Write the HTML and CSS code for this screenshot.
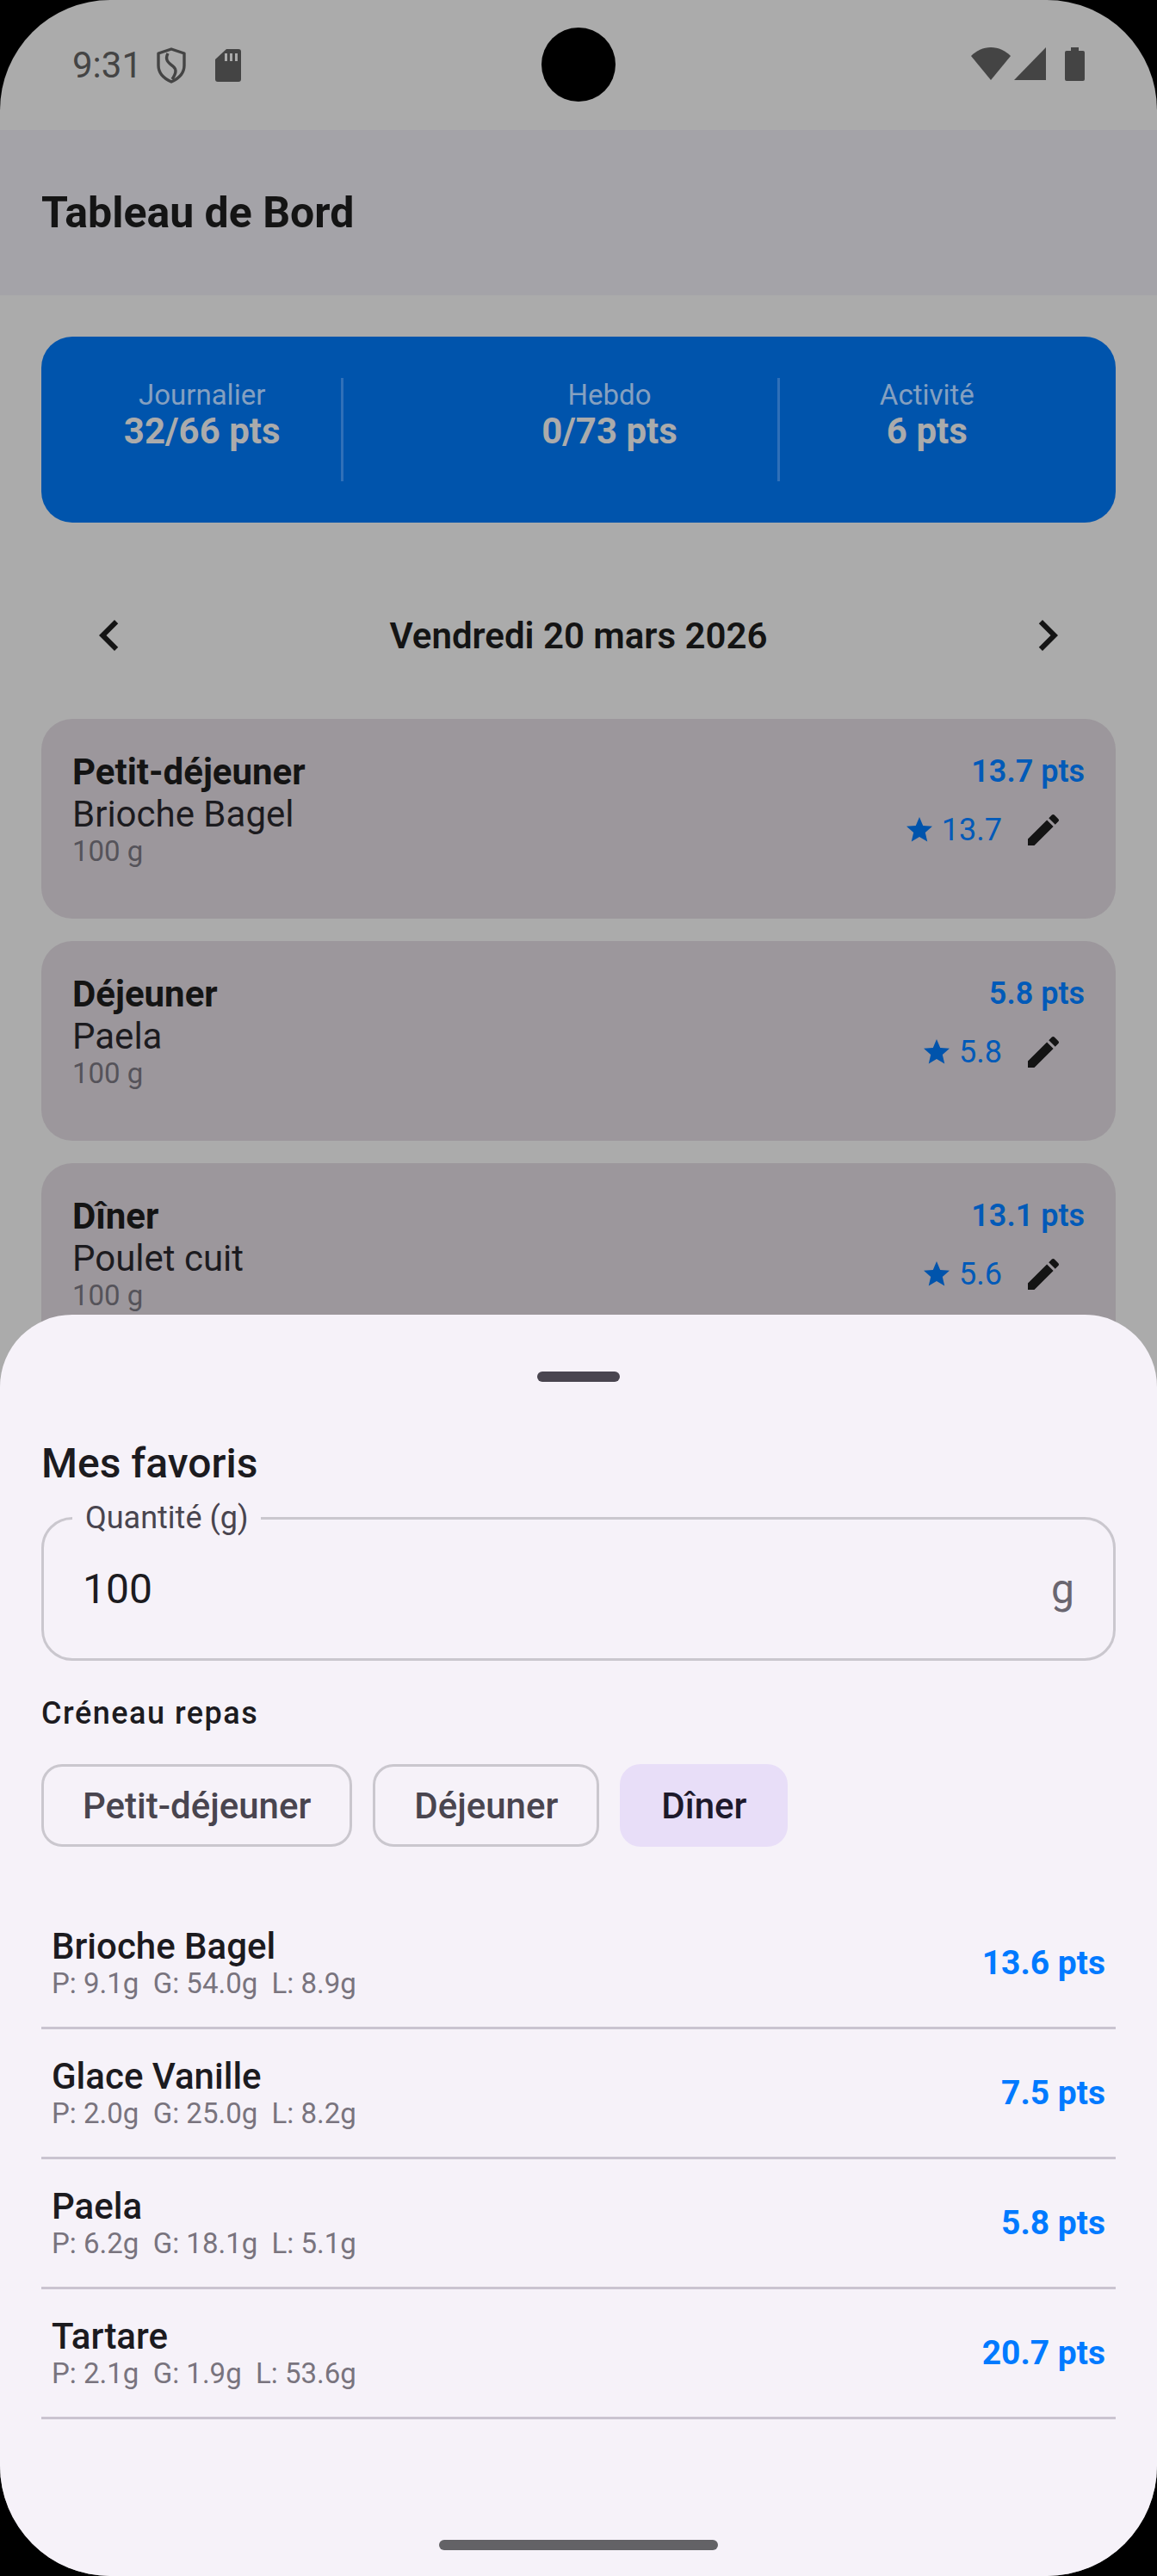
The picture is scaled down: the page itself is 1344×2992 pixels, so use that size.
FILE: index.html
```html
<!DOCTYPE html>
<html lang="fr">
<head>
<meta charset="utf-8">
<title>Tableau de Bord</title>
<link rel="stylesheet" href="styles.css">
</head>
<body>
<div class="device">
  <div class="screen">
    <div class="statusbar">
      <div class="status-left">
        <span class="time">9:31</span>
        <svg class="ic-shield" viewBox="0 0 34 42"><path d="M17 2 L32 7 V21 C32 30 26 36 17 40 C8 36 2 30 2 21 V7 Z" fill="none" stroke="#444" stroke-width="3.4" stroke-linejoin="round"/><path d="M13 7 C9 15 14 18 19 22 C24 26 22 31 18 37" fill="none" stroke="#444" stroke-width="3.4"/></svg>
        <svg class="ic-sd" viewBox="0 0 30 38"><path fill="#444" d="M13 0 H27 Q30 0 30 3 V35 Q30 38 27 38 H3 Q0 38 0 35 V12 Z"/><path fill="#ababab" d="M11 5h3v9h-3zM17 5h3v9h-3zM23 5h3v9h-3z"/></svg>
      </div>
      <div class="status-right">
        <svg class="ic-wifi" viewBox="0 0 46 38"><path fill="#444" d="M23 38 L0 10 C6 4 14 0 23 0 C32 0 40 4 46 10 Z"/></svg>
        <svg class="ic-signal" viewBox="0 0 37 38"><path fill="#444" d="M37 0 V38 H0 Z"/></svg>
        <svg class="ic-batt" viewBox="0 0 23 39"><path fill="#444" d="M7 0 H16 V4 H21 Q23 4 23 6 V37 Q23 39 21 39 H2 Q0 39 0 37 V6 Q0 4 2 4 H7 Z"/></svg>
      </div>
    </div>
    <header class="topbar"><h1 class="title">Tableau de Bord</h1></header>
    <main class="content">
      <section class="summary">
        <div class="stat stat-a"><span class="stat-label">Journalier</span><span class="stat-value">32/66 pts</span></div>
        <div class="stat-sep"></div>
        <div class="stat stat-b"><span class="stat-label">Hebdo</span><span class="stat-value">0/73 pts</span></div>
        <div class="stat-sep"></div>
        <div class="stat stat-c"><span class="stat-label">Activité</span><span class="stat-value">6 pts</span></div>
      </section>
      <nav class="datebar">
        <svg class="chev" viewBox="0 0 24 24"><path fill="#141414" d="M15.41 7.41 14 6l-6 6 6 6 1.41-1.41L10.83 12z"/></svg>
        <span class="date">Vendredi 20 mars 2026</span>
        <svg class="chev" viewBox="0 0 24 24"><path fill="#141414" d="M8.59 16.59 10 18l6-6-6-6-1.41 1.41L13.17 12z"/></svg>
      </nav>
      <article class="meal">
        <div class="meal-head"><span class="meal-name">Petit-déjeuner</span><span class="meal-pts">13.7 pts</span></div>
        <div class="meal-row">
          <div class="meal-food"><div class="food-name">Brioche Bagel</div><div class="food-qty">100 g</div></div>
          <div class="meal-actions"><svg class="star" viewBox="0 0 24 24"><path fill="#0054ac" d="M12 17.27 18.18 21l-1.64-7.03L22 9.24l-7.19-.61L12 2 9.19 8.63 2 9.24l5.46 4.73L5.82 21z"/></svg><span class="food-pts">13.7</span><svg class="edit" viewBox="0 0 24 24"><path fill="#141414" d="M3 17.25V21h3.75L17.81 9.94l-3.75-3.75L3 17.25zM20.71 7.04c.39-.39.39-1.02 0-1.41l-2.34-2.34c-.39-.39-1.02-.39-1.41 0l-1.83 1.83 3.75 3.75 1.83-1.83z"/></svg></div>
        </div>
      </article>
      <article class="meal">
        <div class="meal-head"><span class="meal-name">Déjeuner</span><span class="meal-pts">5.8 pts</span></div>
        <div class="meal-row">
          <div class="meal-food"><div class="food-name">Paela</div><div class="food-qty">100 g</div></div>
          <div class="meal-actions"><svg class="star" viewBox="0 0 24 24"><path fill="#0054ac" d="M12 17.27 18.18 21l-1.64-7.03L22 9.24l-7.19-.61L12 2 9.19 8.63 2 9.24l5.46 4.73L5.82 21z"/></svg><span class="food-pts">5.8</span><svg class="edit" viewBox="0 0 24 24"><path fill="#141414" d="M3 17.25V21h3.75L17.81 9.94l-3.75-3.75L3 17.25zM20.71 7.04c.39-.39.39-1.02 0-1.41l-2.34-2.34c-.39-.39-1.02-.39-1.41 0l-1.83 1.83 3.75 3.75 1.83-1.83z"/></svg></div>
        </div>
      </article>
      <article class="meal">
        <div class="meal-head"><span class="meal-name">Dîner</span><span class="meal-pts">13.1 pts</span></div>
        <div class="meal-row">
          <div class="meal-food"><div class="food-name">Poulet cuit</div><div class="food-qty">100 g</div></div>
          <div class="meal-actions"><svg class="star" viewBox="0 0 24 24"><path fill="#0054ac" d="M12 17.27 18.18 21l-1.64-7.03L22 9.24l-7.19-.61L12 2 9.19 8.63 2 9.24l5.46 4.73L5.82 21z"/></svg><span class="food-pts">5.6</span><svg class="edit" viewBox="0 0 24 24"><path fill="#141414" d="M3 17.25V21h3.75L17.81 9.94l-3.75-3.75L3 17.25zM20.71 7.04c.39-.39.39-1.02 0-1.41l-2.34-2.34c-.39-.39-1.02-.39-1.41 0l-1.83 1.83 3.75 3.75 1.83-1.83z"/></svg></div>
        </div>
      </article>
    </main>
  </div>
  <div class="camera"></div>
  <aside class="sheet">
    <div class="handle"></div>
    <h2 class="sheet-title">Mes favoris</h2>
    <div class="field">
      <span class="field-label">Quantité (g)</span>
      <span class="field-value">100</span>
      <span class="field-suffix">g</span>
    </div>
    <div class="slot-label">Créneau repas</div>
    <div class="chips">
      <span class="chip">Petit-déjeuner</span>
      <span class="chip">Déjeuner</span>
      <span class="chip chip-on">Dîner</span>
    </div>
    <ul class="favs">
      <li class="fav"><div><div class="fav-name">Brioche Bagel</div><div class="fav-macros">P: 9.1g  G: 54.0g  L: 8.9g</div></div><span class="fav-pts">13.6 pts</span></li>
      <li class="fav"><div><div class="fav-name">Glace Vanille</div><div class="fav-macros">P: 2.0g  G: 25.0g  L: 8.2g</div></div><span class="fav-pts">7.5 pts</span></li>
      <li class="fav"><div><div class="fav-name">Paela</div><div class="fav-macros">P: 6.2g  G: 18.1g  L: 5.1g</div></div><span class="fav-pts">5.8 pts</span></li>
      <li class="fav"><div><div class="fav-name">Tartare</div><div class="fav-macros">P: 2.1g  G: 1.9g  L: 53.6g</div></div><span class="fav-pts">20.7 pts</span></li>
    </ul>
    <div class="homebar"></div>
  </aside>
</div>
</body>
</html>
```

FILE: styles.css
```css
* { box-sizing: border-box; margin: 0; padding: 0; }
html, body { width: 1344px; height: 2992px; background: #000; overflow: hidden; }
body { font-family: Roboto, "Liberation Sans", sans-serif; }

.device {
  position: relative;
  width: 1344px;
  height: 2992px;
  border-radius: 128px;
  overflow: hidden;
  background: #ababab;
}
.screen { height: 2992px; background: #ababab; }

.statusbar {
  height: 151px;
  padding: 55px 84px 0;
  display: flex;
  justify-content: space-between;
  align-items: flex-start;
}
.status-left { display: flex; align-items: flex-start; }
.time { font-size: 42px; line-height: 39px; color: #444; width: 98px; margin-top: 1px; }
.ic-shield { width: 34px; height: 42px; }
.ic-sd { width: 30px; height: 38px; margin-left: 34px; margin-top: 2px; }
.status-right { display: flex; align-items: flex-start; }
.ic-wifi { width: 46px; height: 38px; }
.ic-signal { width: 37px; height: 38px; margin-left: 4px; }
.ic-batt { width: 23px; height: 39px; margin-left: 22px; }

.camera {
  position: absolute;
  left: 629px;
  top: 32px;
  width: 86px;
  height: 86px;
  border-radius: 50%;
  background: #000;
}

.topbar {
  height: 192px;
  background: #a4a3a8;
  padding-left: 48px;
  display: flex;
  align-items: center;
}
.title { font-size: 50px; font-weight: 700; color: #141414; }

.content { padding: 48px 48px 0; }

.summary {
  height: 216px;
  border-radius: 36px;
  background: #0054ac;
  display: flex;
  padding-top: 48px;
}
.stat { display: flex; flex-direction: column; align-items: center; height: 120px; }
.stat-a { width: 349px; padding-left: 25px; }
.stat-b { width: 504px; padding-left: 114px; }
.stat-c { width: 391px; padding-right: 48px; }
.stat-sep { width: 3px; height: 120px; background: #3070b8; }
.stat-label { font-size: 33px; line-height: 34px; color: #85a0c0; margin-top: 3px; }
.stat-value { font-size: 42px; line-height: 50px; font-weight: 700; color: #ababab; }

.datebar {
  height: 120px;
  margin-top: 71px;
  padding: 0 47px;
  display: flex;
  align-items: center;
  justify-content: space-between;
}
.chev { width: 72px; height: 72px; margin: 0 -4px; }
.date { font-size: 42px; font-weight: 600; color: #141414; }

.meal {
  height: 232px;
  margin-top: 26px;
  border-radius: 36px;
  background: #9c979c;
  padding: 36px;
}
.datebar + .meal { margin-top: 37px; }
.meal-head { display: flex; justify-content: space-between; align-items: center; height: 50px; }
.meal-name { font-size: 42px; font-weight: 700; color: #141414; }
.meal-pts { font-size: 36px; font-weight: 600; color: #005ab8; }
.meal-row { display: flex; justify-content: space-between; align-items: center; }
.food-name { font-size: 42px; line-height: 50px; color: #1c1b1f; }
.food-qty { font-size: 33px; line-height: 36px; color: #55535a; }
.meal-actions { display: flex; align-items: center; padding-right: 24px; }
.star { width: 36px; height: 36px; }
.food-pts { font-size: 36px; color: #005ab8; margin-left: 8px; }
.edit { width: 48px; height: 48px; margin-left: 24px; }

.sheet {
  position: absolute;
  left: 0;
  right: 0;
  top: 1527px;
  bottom: 0;
  background: #f6f2f9;
  border-radius: 84px 84px 0 0;
  padding: 66px 48px 0;
  display: flex;
  flex-direction: column;
}
.handle { width: 96px; height: 12px; border-radius: 6px; background: #49454f; align-self: center; }
.sheet-title { font-size: 48px; font-weight: 500; color: #1c1b1f; line-height: 56px; margin-top: 67px; }
.field {
  position: relative;
  height: 167px;
  margin-top: 34px;
  border: 3px solid #cac7ce;
  border-radius: 36px;
  display: flex;
  align-items: center;
  justify-content: space-between;
  padding: 0 45px;
}
.field-label {
  position: absolute;
  left: 33px;
  top: -22px;
  padding: 0 15px;
  background: #f6f2f9;
  font-size: 36px;
  line-height: 40px;
  color: #49454f;
}
.field-value { font-size: 48px; color: #1c1b1f; }
.field-suffix { font-size: 48px; color: #6a6670; }
.slot-label { font-size: 36px; font-weight: 500; letter-spacing: 1.5px; color: #1c1b1f; line-height: 42px; margin-top: 40px; }
.chips { display: flex; gap: 24px; margin-top: 38px; }
.chip {
  height: 96px;
  padding: 0 45px;
  border: 3px solid #cac7ce;
  border-radius: 24px;
  font-size: 42px;
  font-weight: 500;
  color: #49454f;
  display: flex;
  align-items: center;
}
.chip-on { border-color: #e8def8; background: #e8def8; color: #1d192b; }
.favs { list-style: none; margin-top: 61px; }
.fav {
  height: 151px;
  border-bottom: 3px solid #cac4d0;
  padding: 0 12px;
  display: flex;
  justify-content: space-between;
  align-items: center;
}
.fav-name { font-size: 42px; line-height: 48px; font-weight: 500; color: #1c1b1f; }
.fav-macros { font-size: 33px; line-height: 38px; color: #79747e; white-space: pre; }
.fav-pts { font-size: 39px; font-weight: 700; color: #007aff; }
.homebar {
  position: absolute;
  left: 510px;
  top: 1423px;
  width: 324px;
  height: 12px;
  border-radius: 6px;
  background: #636266;
}
```
